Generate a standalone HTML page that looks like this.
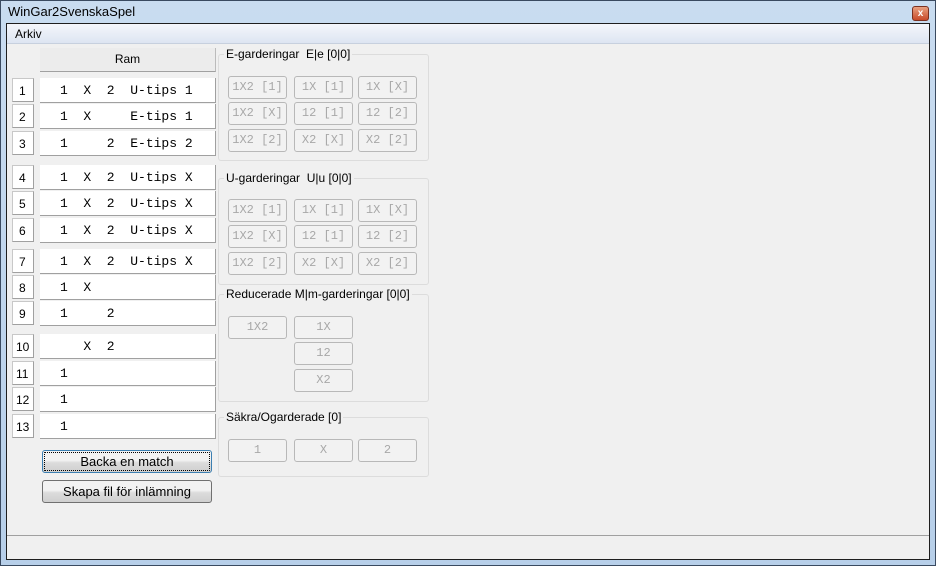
<!DOCTYPE html>
<html><head><style>
body{margin:0;width:936px;height:566px;background:#6d8bb5;position:relative;overflow:hidden;font-family:"Liberation Sans",sans-serif;font-size:12px}
.a{position:absolute;box-sizing:border-box}
.title{left:0;top:0;width:936px;height:566px;background:linear-gradient(#c9dcf0,#b7cfe9);border:1px solid #3a4a60}
.client{left:6px;top:23px;width:924px;height:537px;background:#f0f0f0;border:1px solid #1e1e1e}
.menu{left:7px;top:24px;width:922px;height:20px;background:linear-gradient(#f4f6fb,#dde5f2);border-bottom:1px solid #c7d0de}
.num{background:#fff;border:1px solid #c8c8c8;border-right-color:#a0a0a0;border-bottom-color:#a0a0a0;width:22px;height:24px;font-size:12px;padding:5px 0 0 6px}
.row{background:#fff;border-bottom:1px solid #a0a0a0;border-right:1px solid #a0a0a0;left:40px;width:176px;height:25px;font-family:"Liberation Mono",monospace;font-size:13px;white-space:pre;padding:5px 0 0 20px}
.grp{border:1px solid #dcdcdc;border-radius:3px;left:218px;width:211px}
.gt{left:224px;background:#f0f0f0;padding:0 2px;font-size:12px;color:#000}
.b{border:1px solid #b8b8b8;border-radius:3px;background:#f2f2f2;width:59px;height:23px;color:#a8a8a8;font-family:"Liberation Mono",monospace;font-size:12px;text-align:center;line-height:21px}
.btn{border:1px solid #707070;border-radius:3px;background:linear-gradient(#f2f2f2 45%,#dcdcdc 55%,#cfcfcf);left:42px;width:170px;height:23px;text-align:center;line-height:21px;font-size:13px}
</style></head><body>
<div class="a title"></div>
<div class="a" style="left:8px;top:4px;font-size:13px">WinGar2SvenskaSpel</div>
<div class="a" style="left:912px;top:6px;width:17px;height:15px;background:linear-gradient(#e8a080,#c84a2a);border:1px solid #7a3020;border-radius:3px;color:#fff;font-size:10px;text-align:center;line-height:13px;font-weight:bold">x</div>
<div class="a client"></div>
<div class="a menu"><span style="position:absolute;left:8px;top:3px;font-size:12px">Arkiv</span></div>
<div class="a" style="left:7px;top:535px;width:922px;height:1px;background:#a0a0a0"></div>

<div class="a" style="left:40px;top:48px;width:176px;height:24px;background:#ececec;border-bottom:1px solid #a0a0a0;border-right:1px solid #bbb;text-align:center;line-height:23px;font-size:12px">Ram</div>

<div class="a num" style="left:12px;top:78px">1</div><div class="a row" style="top:78px">1  X  2  U-tips 1</div>
<div class="a num" style="left:12px;top:104px">2</div><div class="a row" style="top:104px">1  X     E-tips 1</div>
<div class="a num" style="left:12px;top:131px">3</div><div class="a row" style="top:131px">1     2  E-tips 2</div>
<div class="a num" style="left:12px;top:165px">4</div><div class="a row" style="top:165px">1  X  2  U-tips X</div>
<div class="a num" style="left:12px;top:191px">5</div><div class="a row" style="top:191px">1  X  2  U-tips X</div>
<div class="a num" style="left:12px;top:218px">6</div><div class="a row" style="top:218px">1  X  2  U-tips X</div>
<div class="a num" style="left:12px;top:249px">7</div><div class="a row" style="top:249px">1  X  2  U-tips X</div>
<div class="a num" style="left:12px;top:275px">8</div><div class="a row" style="top:275px">1  X</div>
<div class="a num" style="left:12px;top:301px">9</div><div class="a row" style="top:301px">1     2</div>
<div class="a num" style="left:12px;top:334px;padding-left:3px">10</div><div class="a row" style="top:334px">   X  2</div>
<div class="a num" style="left:12px;top:361px;padding-left:3px">11</div><div class="a row" style="top:361px">1</div>
<div class="a num" style="left:12px;top:387px;padding-left:3px">12</div><div class="a row" style="top:387px">1</div>
<div class="a num" style="left:12px;top:414px;padding-left:3px">13</div><div class="a row" style="top:414px">1</div>

<div class="a btn" style="top:450px;border-color:#3c7fb1;outline:1px dotted #000;outline-offset:-3px">Backa en match</div>
<div class="a btn" style="top:480px">Skapa fil för inlämning</div>

<div class="a grp" style="top:54px;height:107px"></div>
<div class="a gt" style="top:47px">E-garderingar&nbsp; E|e [0|0]</div>
<div class="a b" style="left:228px;top:76px">1X2 [1]</div><div class="a b" style="left:294px;top:76px">1X [1]</div><div class="a b" style="left:358px;top:76px">1X [X]</div>
<div class="a b" style="left:228px;top:102px">1X2 [X]</div><div class="a b" style="left:294px;top:102px">12 [1]</div><div class="a b" style="left:358px;top:102px">12 [2]</div>
<div class="a b" style="left:228px;top:129px">1X2 [2]</div><div class="a b" style="left:294px;top:129px">X2 [X]</div><div class="a b" style="left:358px;top:129px">X2 [2]</div>

<div class="a grp" style="top:178px;height:107px"></div>
<div class="a gt" style="top:171px">U-garderingar&nbsp; U|u [0|0]</div>
<div class="a b" style="left:228px;top:199px">1X2 [1]</div><div class="a b" style="left:294px;top:199px">1X [1]</div><div class="a b" style="left:358px;top:199px">1X [X]</div>
<div class="a b" style="left:228px;top:225px">1X2 [X]</div><div class="a b" style="left:294px;top:225px">12 [1]</div><div class="a b" style="left:358px;top:225px">12 [2]</div>
<div class="a b" style="left:228px;top:252px">1X2 [2]</div><div class="a b" style="left:294px;top:252px">X2 [X]</div><div class="a b" style="left:358px;top:252px">X2 [2]</div>

<div class="a grp" style="top:294px;height:108px"></div>
<div class="a gt" style="top:287px">Reducerade M|m-garderingar [0|0]</div>
<div class="a b" style="left:228px;top:316px">1X2</div>
<div class="a b" style="left:294px;top:316px">1X</div>
<div class="a b" style="left:294px;top:342px">12</div>
<div class="a b" style="left:294px;top:369px">X2</div>

<div class="a grp" style="top:417px;height:60px"></div>
<div class="a gt" style="top:410px">Säkra/Ogarderade [0]</div>
<div class="a b" style="left:228px;top:439px">1</div><div class="a b" style="left:294px;top:439px">X</div><div class="a b" style="left:358px;top:439px">2</div>
</body></html>
